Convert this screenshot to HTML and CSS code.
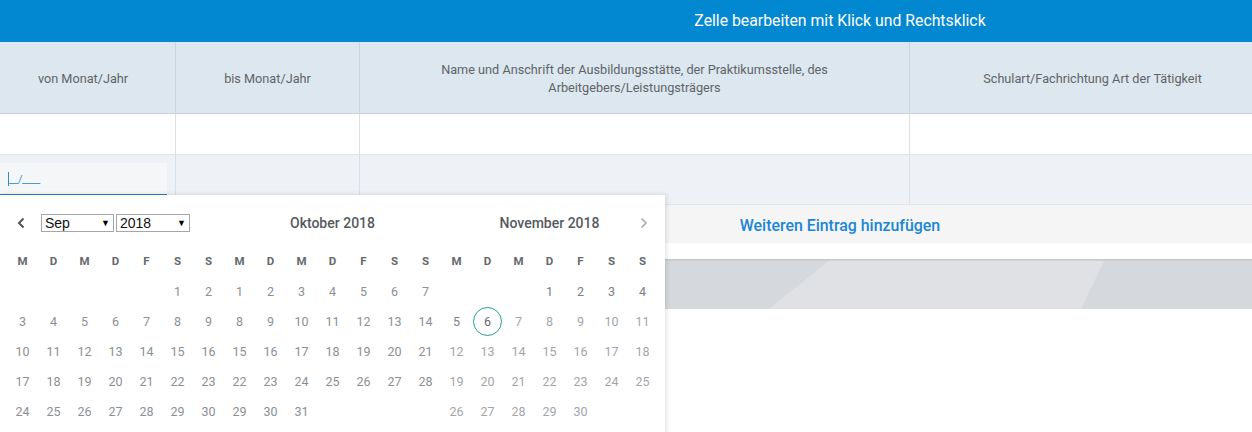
FILE: index.html
```html
<!DOCTYPE html>
<html lang="de">
<head>
<meta charset="utf-8">
<title>Tabelle</title>
<link rel="stylesheet" href="styles.css">
</head>
<body>
<div class="page">
  <div class="titlebar"><span class="title">Zelle bearbeiten mit Klick und Rechtsklick</span></div>
  <div class="grid">
    <div class="cell head head-first">von Monat/Jahr</div>
    <div class="cell head">bis Monat/Jahr</div>
    <div class="cell head">Name und Anschrift der Ausbildungsstätte, der Praktikumsstelle, des<br>Arbeitgebers/Leistungsträgers</div>
    <div class="cell head">Schulart/Fachrichtung Art der Tätigkeit</div>

    <div class="cell r1"></div>
    <div class="cell r1"></div>
    <div class="cell r1"></div>
    <div class="cell r1"></div>

    <div class="cell r2"><div class="maskinput"><span class="caret"></span><span class="mask">__/____</span></div></div>
    <div class="cell r2"></div>
    <div class="cell r2"></div>
    <div class="cell r2"></div>
  </div>
  <div class="addrow"><span class="addlink">Weiteren Eintrag hinzufügen</span></div>
  <div class="gap"></div>
  <div class="band">
    <svg class="bandsvg" viewBox="0 0 1252 50" preserveAspectRatio="none">
      <rect x="0" y="0" width="1252" height="50" fill="#d5d8dc"/>
      <polygon points="831,0 1105,0 1081,50 769,50" fill="#dfe1e4"/>
      <rect x="0" y="0" width="1252" height="1.5" fill="#c4c7cb"/>
    </svg>
  </div>

  <div class="datepicker">
    <div class="dp-head">
      <div class="mh mh-left">
        <svg class="chev" viewBox="0 0 8 12" width="8" height="12"><path d="M6.5 1.5 L2 6 L6.5 10.5" fill="none" stroke="#555" stroke-width="2"/></svg>
        <div class="sel sel-m"><span>Sep</span><span class="tri">▼</span></div>
        <div class="sel sel-y"><span>2018</span><span class="tri">▼</span></div>
      </div>
      <div class="mh mh-center"><span></span><span class="mtitle">Oktober 2018</span><span></span></div>
      <div class="mh mh-center"><span></span><span class="mtitle">November 2018</span>
        <svg class="chev chev-r" viewBox="0 0 8 12" width="8" height="12"><path d="M1.5 1.5 L6 6 L1.5 10.5" fill="none" stroke="#aaa" stroke-width="1.6"/></svg>
      </div>
    </div>
    <div class="months">
      <div class="month" id="m0"></div>
      <div class="month" id="m1"></div>
      <div class="month" id="m2"></div>
    </div>
  </div>
</div>
<script src="app.js"></script>
</body>
</html>
```
FILE: app.js
```js
(function () {
  var wd = ['M', 'D', 'M', 'D', 'F', 'S', 'S'];
  var months = [
    { id: 'm0', offset: 5, days: 30, cls: function () { return 'd'; } },
    { id: 'm1', offset: 0, days: 31, cls: function () { return 'd'; } },
    { id: 'm2', offset: 3, days: 30, cls: function (d) { return d === 6 ? 'd today' : (d < 6 ? 'd dark' : 'd light'); } }
  ];
  months.forEach(function (m) {
    var el = document.getElementById(m.id);
    var html = '';
    wd.forEach(function (w) { html += '<div class="wd">' + w + '</div>'; });
    for (var i = 0; i < m.offset; i++) html += '<div class="d empty"></div>';
    for (var d = 1; d <= m.days; d++) {
      var c = m.cls(d);
      if (c.indexOf('today') >= 0) {
        html += '<div class="' + c + '"><span class="ring">' + d + '</span></div>';
      } else {
        html += '<div class="' + c + '">' + d + '</div>';
      }
    }
    el.innerHTML = html;
  });
})();
```
FILE: styles.css
```css
html, body {
  margin: 0;
  padding: 0;
  background: #ffffff;
}
body {
  font-family: Roboto, "Liberation Sans", Arial, sans-serif;
}
.page {
  position: relative;
  width: 1252px;
  height: 432px;
  overflow: hidden;
  background: #fff;
}
.titlebar {
  height: 42px;
  background: #0288d1;
  display: flex;
  align-items: center;
  justify-content: center;
  padding-left: 428px;
  box-sizing: border-box;
}
.title {
  color: #fff;
  font-size: 15.8px;
  position: relative;
  top: -1px;
}
.grid {
  display: grid;
  grid-template-columns: 176px 184px 550px 366px;
  width: 1276px;
}
.cell {
  box-sizing: border-box;
  border-right: 1px solid #d9e0e6;
}
.head {
  height: 72px;
  background: #dce7ef;
  border-bottom: 1px solid #c3d1dc;
  border-right-color: #c9d6e0;
  display: flex;
  align-items: center;
  justify-content: center;
  text-align: center;
  font-size: 12.7px;
  line-height: 18px;
  color: #606468;
  padding-top: 2px;
}
.head-first {
  padding-right: 9px;
}
.r1 {
  height: 41px;
  background: #fff;
  border-bottom: 1px solid #dfe4e8;
}
.r2 {
  height: 50px;
  background: #eef2f6;
  border-bottom: 1px solid #e0e5ea;
}
.maskinput {
  margin-top: 8px;
  width: 167px;
  height: 32px;
  box-sizing: border-box;
  background: #f5f6f8;
  border-bottom: 1px solid #1f7fbf;
  display: flex;
  align-items: flex-end;
  padding: 0 0 8px 8px;
}
.caret {
  width: 1px;
  height: 14px;
  background: #2b8ccc;
}
.mask {
  color: #3a92cc;
  font-size: 11px;
  line-height: 12px;
  letter-spacing: -0.5px;
}
.addrow {
  height: 38px;
  background: #f5f5f5;
  display: flex;
  align-items: center;
  justify-content: center;
  padding-left: 428px;
  box-sizing: border-box;
}
.addlink {
  color: #1c86d6;
  font-size: 15.9px;
  font-weight: 500;
  position: relative;
  top: 1px;
}
.gap {
  height: 16px;
}
.band {
  height: 50px;
}
.bandsvg {
  display: block;
  width: 100%;
  height: 50px;
}
.datepicker {
  position: absolute;
  left: 0;
  top: 195px;
  width: 665px;
  height: 250px;
  box-sizing: border-box;
  background: #fff;
  padding: 12px 7px 0 7px;
  box-shadow: 1px 0 5px rgba(0, 0, 0, 0.14);
}
.dp-head {
  display: grid;
  grid-template-columns: repeat(3, 217px);
  height: 30px;
  margin-bottom: 9px;
  position: relative;
  top: 1px;
}
.mh {
  display: flex;
  align-items: center;
}
.mh-left {
  padding-left: 10px;
}
.mh-left .chev {
  margin-right: 16px;
}
.mh-center {
  display: grid;
  grid-template-columns: 1fr auto 1fr;
  align-items: center;
}
.chev-r {
  justify-self: end;
  margin-right: 10px;
}
.mtitle {
  font-size: 14px;
  font-weight: 500;
  color: #555a5e;
}
.sel {
  box-sizing: border-box;
  height: 18px;
  border: 1px solid #a6a6a6;
  background: #fff;
  display: flex;
  align-items: center;
  justify-content: space-between;
  padding: 0 3px 0 3px;
  font-family: "Liberation Sans", Arial, sans-serif;
  font-size: 14px;
  color: #111;
}
.sel-m {
  width: 73px;
  margin-right: 2px;
}
.sel-y {
  width: 74px;
}
.tri {
  font-size: 9px;
  color: #000;
}
.months {
  display: grid;
  grid-template-columns: repeat(3, 217px);
}
.month {
  display: grid;
  grid-template-columns: repeat(7, 31px);
  grid-auto-rows: 30px;
}
.wd {
  display: flex;
  align-items: center;
  justify-content: center;
  font-size: 11.5px;
  font-weight: 700;
  color: #65696d;
}
.d {
  display: flex;
  align-items: center;
  justify-content: center;
  font-size: 12.5px;
  color: #8c9094;
}
.d.dark {
  color: #7c8084;
}
.d.light {
  color: #a2a6a9;
}
.ring {
  width: 29px;
  height: 29px;
  box-sizing: border-box;
  border: 1px solid #26a08e;
  border-radius: 50%;
  display: flex;
  align-items: center;
  justify-content: center;
  color: #666a6e;
}
```
